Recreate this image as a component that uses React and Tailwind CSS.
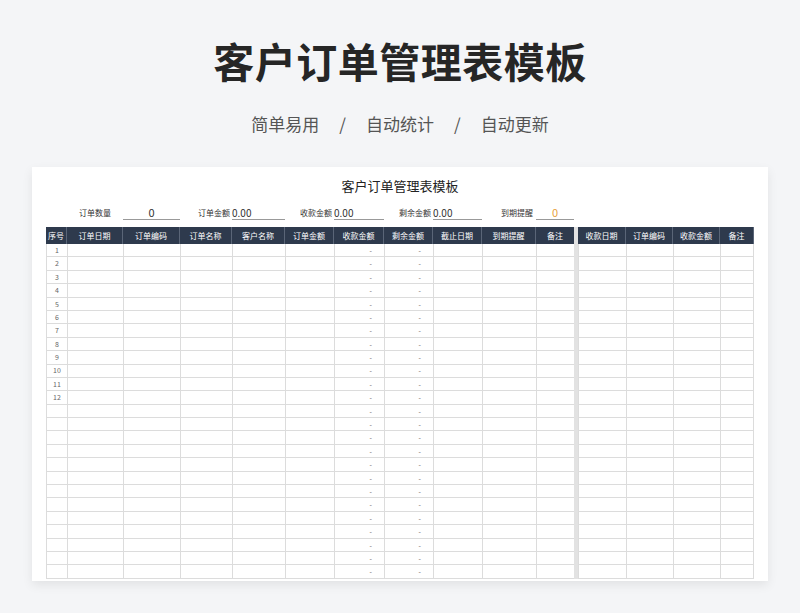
const L = "grid grid-cols-[21px_56px_57px_52px_53px_49px_50px_49px_49px_54px_38px]";
const R = "grid grid-cols-[48px_47px_47px_34px]";
const lh = ["序号","订单日期","订单编码","订单名称","客户名称","订单金额","收款金额","剩余金额","截止日期","到期提醒","备注"];
const rh = ["收款日期","订单编码","收款金额","备注"];
const rows = Array.from({length:25},(_,i)=>i);
export default function App(){
  return (
    <div className="w-[800px] h-[613px] bg-[#f4f5f7] overflow-hidden flex flex-col items-center" style={{fontFamily:'"Noto Sans CJK SC", sans-serif'}}>
      <h1 className="mt-[32px] text-[41px] leading-[56px] font-bold text-[#262626] tracking-[0.5px]">客户订单管理表模板</h1>
      <div className="mt-[24px] flex gap-[20px] text-[17px] leading-[24px] text-[#555]">
        <span>简单易用</span><span>/</span><span>自动统计</span><span>/</span><span>自动更新</span>
      </div>
      <div className="mt-[31px] w-[736px] h-[414px] bg-white shadow-[0_4px_10px_rgba(0,0,0,0.08)] overflow-hidden pl-[14px]">
        <div className="pt-[10px] h-[34px] text-center text-[13px] leading-[18px] text-[#222] pr-[14px]">客户订单管理表模板</div>
        <div className={L+" h-[26px] items-end pb-[7px] text-[8px] text-[#333]"}>
          <div/><div className="text-center pb-[1px]">订单数量</div>
          <div className="border-b border-[#999] text-center text-[11px] leading-[13px]">0</div>
          <div className="text-right pr-[2px] pb-[1px]">订单金额</div>
          <div className="border-b border-[#999] text-[10px] leading-[13px]">0.00</div>
          <div className="text-right pr-[2px] pb-[1px]">收款金额</div>
          <div className="border-b border-[#999] text-[10px] leading-[13px]">0.00</div>
          <div className="text-right pr-[2px] pb-[1px]">剩余金额</div>
          <div className="border-b border-[#999] text-[10px] leading-[13px]">0.00</div>
          <div className="text-right pr-[3px] pb-[1px]">到期提醒</div>
          <div className="border-b border-[#999] text-center text-[11px] leading-[13px] text-[#e8a040]">0</div>
        </div>
        <div className="flex">
          <div>
            <div className={L+" h-[17px] bg-[#2e3a4d] text-white text-[8px]"}>
              {lh.map((h,i)=><div key={i} className="flex items-center justify-center border-r border-[#5a6577] last:border-r-0">{h}</div>)}
            </div>
            {rows.map(r=>(
              <div key={r} className={L+" h-[13.4px] border-b border-[#dcdcdc] text-[7px] text-[#666]"}>
                {lh.map((_,i)=><div key={i} className={"border-l border-[#dcdcdc] flex items-center "+(i===0?"justify-center":"justify-end pr-[12px]")}>
                  {i===0 && r<12 ? r+1 : (i===6||i===7) ? "-" : ""}
                </div>)}
              </div>
            ))}
          </div>
          <div className="w-[4px] bg-[#e2e2e2]"/>
          <div>
            <div className={R+" h-[17px] bg-[#2e3a4d] text-white text-[8px]"}>
              {rh.map((h,i)=><div key={i} className="flex items-center justify-center border-r border-[#5a6577]">{h}</div>)}
            </div>
            {rows.map(r=>(
              <div key={r} className={R+" h-[13.4px] border-b border-[#dcdcdc]"}>
                {rh.map((_,i)=><div key={i} className="border-l border-[#dcdcdc] last:border-r"/>)}
              </div>
            ))}
          </div>
        </div>
      </div>
    </div>
  );
}
